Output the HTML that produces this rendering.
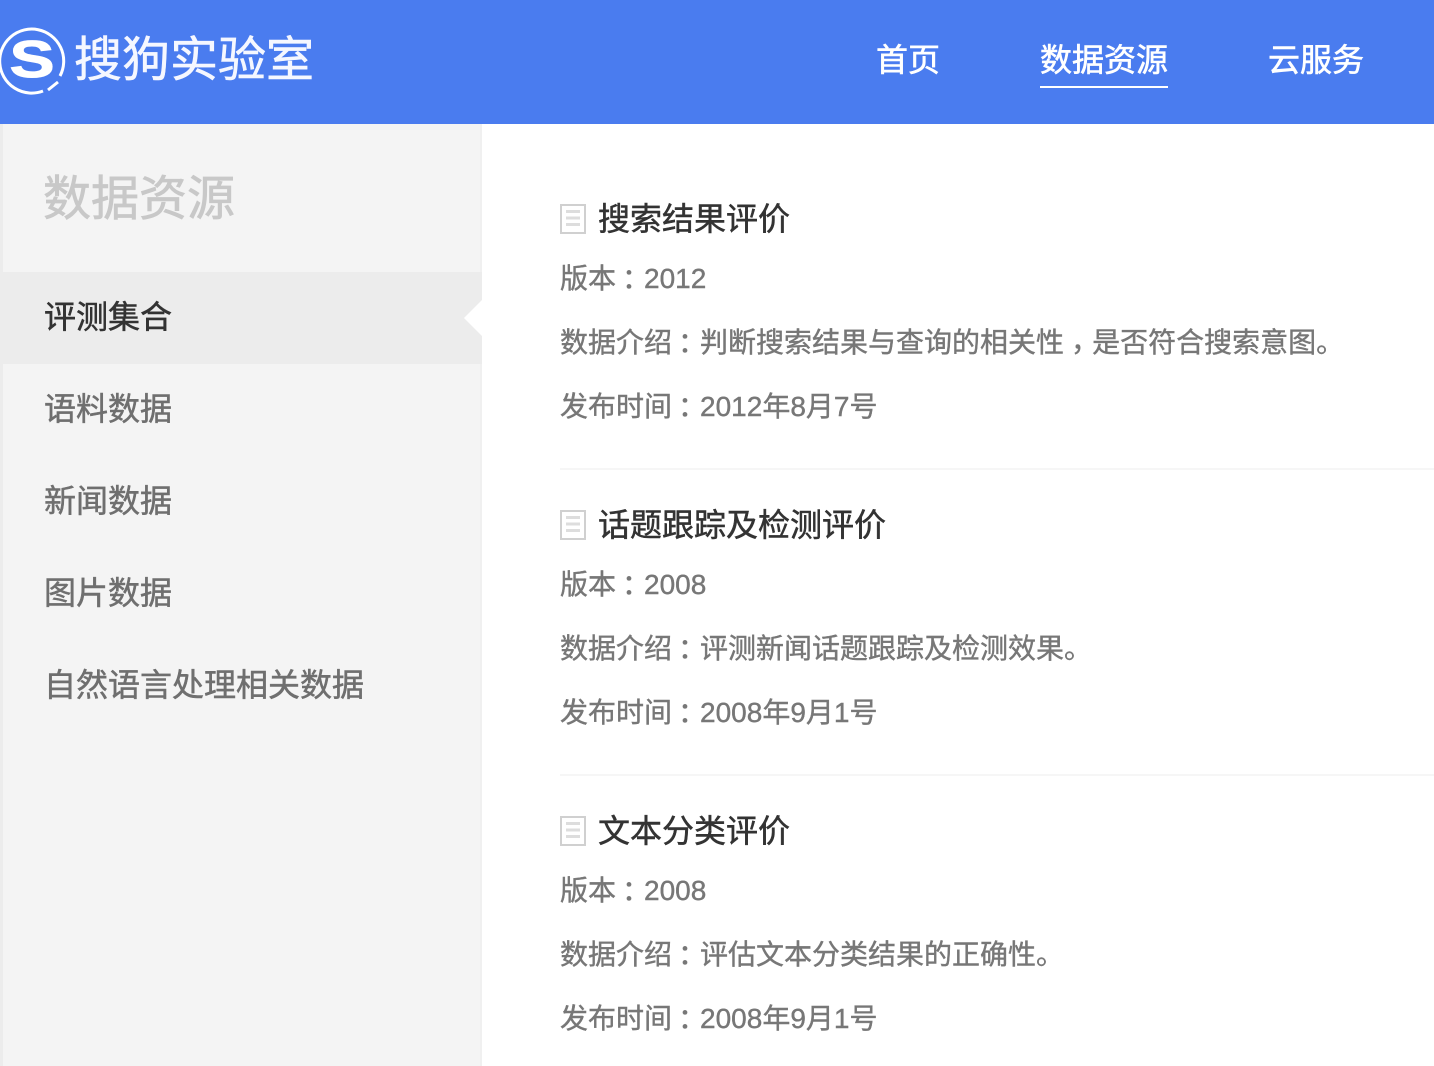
<!DOCTYPE html>
<html lang="zh"><head><meta charset="utf-8"><title>搜狗实验室</title>
<style>
html,body{margin:0;padding:0}
body{width:1434px;height:1066px;overflow:hidden;position:relative;background:#fff;font-family:"Liberation Sans","Noto Sans CJK SC",sans-serif}
.a{position:absolute;white-space:nowrap}
.c{position:relative;left:6px}
.k{position:relative;left:7px;top:-1px}
#h{left:0;top:0;width:1434px;height:124px;background:#4a7cef}
.n{font-size:32px;line-height:44px;top:38px;color:#fff;-webkit-text-stroke:.6px #fff}
#s{left:3px;top:124px;width:477px;height:942px;background:#f4f4f4;border-right:2px solid #f0f0f0}
#edge{left:0;top:124px;width:3px;height:942px;background:#ececec}
#act{left:3px;top:272px;width:479px;height:92px;background:#ececec}
.i{left:44px;font-size:32px;line-height:44px;color:#6f6f6f;-webkit-text-stroke:.5px #6f6f6f}
.t{left:598px;font-size:32px;line-height:44px;color:#333;-webkit-text-stroke:.5px #333}
.m{left:560px;font-size:28px;line-height:40px;color:#777;-webkit-text-stroke:.4px #777}
.r{left:560px;width:874px;height:2px;background:#f6f6f6}
.d{left:560px;width:22px;height:26px;border:2px solid #d0d0d0;background:#fff}
.d:before{content:"";position:absolute;left:4px;right:4px;top:4px;height:3px;background:#ddd;box-shadow:0 6.5px 0 #ddd,0 13px 0 #ddd}
</style></head><body>
<div class="a" id="h"></div>
<svg class="a" style="left:0;top:24px" width="70" height="72" viewBox="0 0 70 72">
<path d="M43 67A32 32 0 1 1 60 52" fill="none" stroke="#fff" stroke-width="3"/>
<path d="M48 66L58 58" fill="none" stroke="#fff" stroke-width="3"/>
<text transform="translate(32 53) scale(1.3 1)" text-anchor="middle" font-family="Liberation Sans" font-weight="700" font-size="52" fill="#fff" stroke="#fff" stroke-width="1">S</text>
</svg>
<div class="a" style="left:74px;top:28px;font-size:48px;line-height:66px;color:#f5f7ff;-webkit-text-stroke:.6px #f5f7ff">搜狗实验室</div>
<div class="a n" style="left:876px">首页</div>
<div class="a n" style="left:1040px">数据资源</div>
<div class="a" style="left:1040px;top:86px;width:128px;height:2px;background:#fff"></div>
<div class="a n" style="left:1268px">云服务</div>
<div class="a" id="edge"></div>
<div class="a" id="s"></div>
<div class="a" style="left:43px;top:167px;font-size:48px;line-height:66px;color:#c8c8c8;-webkit-text-stroke:.7px #c8c8c8">数据资源</div>
<div class="a" id="act"></div>
<div class="a" style="left:464px;top:300px;width:0;height:0;border-top:18px solid transparent;border-bottom:18px solid transparent;border-right:18px solid #fff"></div>
<div class="a i" style="top:295px;color:#333;-webkit-text-stroke-color:#333">评测集合</div>
<div class="a i" style="top:387px">语料数据</div>
<div class="a i" style="top:479px">新闻数据</div>
<div class="a i" style="top:571px">图片数据</div>
<div class="a i" style="top:663px">自然语言处理相关数据</div>

<div class="a d" style="top:204px"></div>
<div class="a t" style="top:197px">搜索结果评价</div>
<div class="a m" style="top:259px">版本<span class="c">：</span>2012</div>
<div class="a m" style="top:323px">数据介绍<span class="c">：</span>判断搜索结果与查询的相关性<span class="k">，</span>是否符合搜索意图。</div>
<div class="a m" style="top:387px">发布时间<span class="c">：</span>2012年8月7号</div>
<div class="a r" style="top:468px"></div>

<div class="a d" style="top:510px"></div>
<div class="a t" style="top:503px">话题跟踪及检测评价</div>
<div class="a m" style="top:565px">版本<span class="c">：</span>2008</div>
<div class="a m" style="top:629px">数据介绍<span class="c">：</span>评测新闻话题跟踪及检测效果。</div>
<div class="a m" style="top:693px">发布时间<span class="c">：</span>2008年9月1号</div>
<div class="a r" style="top:774px"></div>

<div class="a d" style="top:816px"></div>
<div class="a t" style="top:809px">文本分类评价</div>
<div class="a m" style="top:871px">版本<span class="c">：</span>2008</div>
<div class="a m" style="top:935px">数据介绍<span class="c">：</span>评估文本分类结果的正确性。</div>
<div class="a m" style="top:999px">发布时间<span class="c">：</span>2008年9月1号</div>
</body></html>
